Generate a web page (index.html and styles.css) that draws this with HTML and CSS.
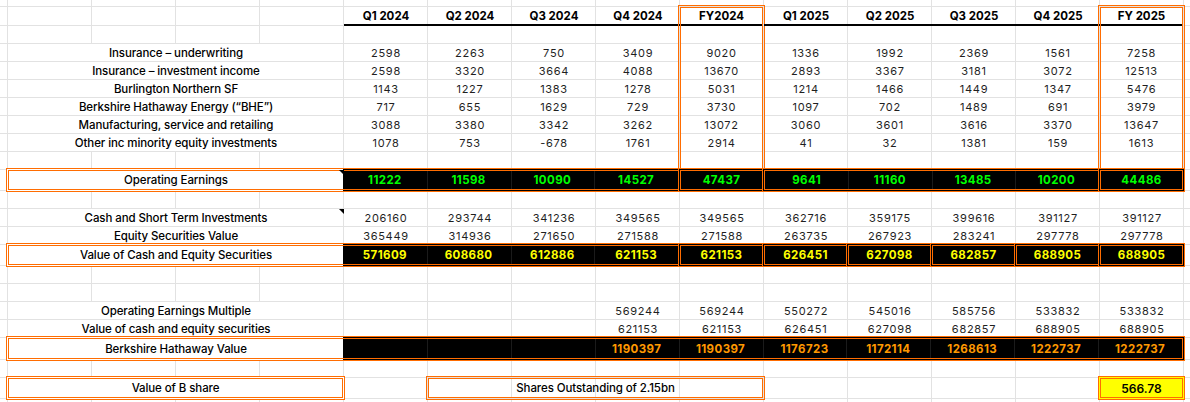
FILE: index.html
```html
<!DOCTYPE html>
<html lang="en">
<head>
<meta charset="utf-8">
<title>Berkshire Hathaway valuation</title>
<link rel="stylesheet" href="styles.css">
</head>
<body>
<div class="sheet">
  <div class="row h7"></div>

  <div class="row h19">
    <div class="nolab"></div>
    <div class="hd">Q1 2024</div>
    <div class="hd">Q2 2024</div>
    <div class="hd">Q3 2024</div>
    <div class="hd">Q4 2024</div>
    <div class="hd fyc fyt">FY2024</div>
    <div class="hd">Q1 2025</div>
    <div class="hd">Q2 2025</div>
    <div class="hd">Q3 2025</div>
    <div class="hd">Q4 2025</div>
    <div class="hd fyc fyt">FY 2025</div>
  </div>

  <div class="row">
    <div class="nolab"></div>
    <div></div><div></div><div></div><div></div>
    <div class="fyc"></div>
    <div></div><div></div><div></div><div></div>
    <div class="fyc"></div>
  </div>

  <div class="row">
    <div class="lab">Insurance – underwriting</div>
    <div class="n">2598</div><div class="n">2263</div><div class="n">750</div><div class="n">3409</div>
    <div class="n fyc">9020</div>
    <div class="n">1336</div><div class="n">1992</div><div class="n">2369</div><div class="n">1561</div>
    <div class="n fyc">7258</div>
  </div>

  <div class="row">
    <div class="lab">Insurance – investment income</div>
    <div class="n">2598</div><div class="n">3320</div><div class="n">3664</div><div class="n">4088</div>
    <div class="n fyc">13670</div>
    <div class="n">2893</div><div class="n">3367</div><div class="n">3181</div><div class="n">3072</div>
    <div class="n fyc">12513</div>
  </div>

  <div class="row">
    <div class="lab">Burlington Northern SF</div>
    <div class="n">1143</div><div class="n">1227</div><div class="n">1383</div><div class="n">1278</div>
    <div class="n fyc">5031</div>
    <div class="n">1214</div><div class="n">1466</div><div class="n">1449</div><div class="n">1347</div>
    <div class="n fyc">5476</div>
  </div>

  <div class="row">
    <div class="lab">Berkshire Hathaway Energy (“BHE”)</div>
    <div class="n">717</div><div class="n">655</div><div class="n">1629</div><div class="n">729</div>
    <div class="n fyc">3730</div>
    <div class="n">1097</div><div class="n">702</div><div class="n">1489</div><div class="n">691</div>
    <div class="n fyc">3979</div>
  </div>

  <div class="row">
    <div class="lab">Manufacturing, service and retailing</div>
    <div class="n">3088</div><div class="n">3380</div><div class="n">3342</div><div class="n">3262</div>
    <div class="n fyc">13072</div>
    <div class="n">3060</div><div class="n">3601</div><div class="n">3616</div><div class="n">3370</div>
    <div class="n fyc">13647</div>
  </div>

  <div class="row">
    <div class="lab">Other inc minority equity investments</div>
    <div class="n">1078</div><div class="n">753</div><div class="n">-678</div><div class="n">1761</div>
    <div class="n fyc">2914</div>
    <div class="n">41</div><div class="n">32</div><div class="n">1381</div><div class="n">159</div>
    <div class="n fyc">1613</div>
  </div>

  <div class="row">
    <div class="nolab"></div>
    <div></div><div></div><div></div><div></div>
    <div class="fyc"></div>
    <div></div><div></div><div></div><div></div>
    <div class="fyc"></div>
  </div>

  <div class="row h21">
    <div class="lab box nr note">Operating Earnings</div>
    <div class="box nl blk green s4"><div>11222</div><div>11598</div><div>10090</div><div>14527</div></div>
    <div class="box blk green"><div>47437</div></div>
    <div class="box blk green s4"><div>9641</div><div>11160</div><div>13485</div><div>10200</div></div>
    <div class="box blk green"><div>44486</div></div>
  </div>

  <div class="row"></div>

  <div class="row">
    <div class="lab note">Cash and Short Term Investments</div>
    <div class="n">206160</div><div class="n">293744</div><div class="n">341236</div><div class="n">349565</div>
    <div class="n">349565</div>
    <div class="n">362716</div><div class="n">359175</div><div class="n">399616</div><div class="n">391127</div>
    <div class="n">391127</div>
  </div>

  <div class="row">
    <div class="lab">Equity Securities Value</div>
    <div class="n">365449</div><div class="n">314936</div><div class="n">271650</div><div class="n">271588</div>
    <div class="n">271588</div>
    <div class="n">263735</div><div class="n">267923</div><div class="n">283241</div><div class="n">297778</div>
    <div class="n">297778</div>
  </div>

  <div class="row h21">
    <div class="lab box nr">Value of Cash and Equity Securities</div>
    <div class="box nl blk yellow s4"><div>571609</div><div>608680</div><div>612886</div><div>621153</div></div>
    <div class="box blk yellow"><div>621153</div></div>
    <div class="box blk yellow"><div>626451</div></div>
    <div class="box blk yellow"><div>627098</div></div>
    <div class="box blk yellow"><div>682857</div></div>
    <div class="box blk yellow"><div>688905</div></div>
    <div class="box blk yellow"><div>688905</div></div>
  </div>

  <div class="row"></div>
  <div class="row"></div>

  <div class="row">
    <div class="lab">Operating Earnings Multiple</div>
    <div></div><div></div><div></div>
    <div class="n">569244</div>
    <div class="n">569244</div>
    <div class="n">550272</div><div class="n">545016</div><div class="n">585756</div><div class="n">533832</div>
    <div class="n">533832</div>
  </div>

  <div class="row">
    <div class="lab">Value of cash and equity securities</div>
    <div></div><div></div><div></div>
    <div class="n">621153</div>
    <div class="n">621153</div>
    <div class="n">626451</div><div class="n">627098</div><div class="n">682857</div><div class="n">688905</div>
    <div class="n">688905</div>
  </div>

  <div class="row h22">
    <div class="lab box nr">Berkshire Hathaway Value</div>
    <div class="box nl blk orange s10">
      <div></div><div></div><div></div>
      <div>1190397</div><div>1190397</div>
      <div>1176723</div><div>1172114</div><div>1268613</div><div>1222737</div>
      <div>1222737</div>
    </div>
  </div>

  <div class="row"></div>

  <div class="row h21">
    <div class="lab box">Value of B share</div>
    <div></div>
    <div class="box s4 txt">Shares Outstanding of 2.15bn</div>
    <div></div><div></div><div></div><div></div>
    <div class="box yel">566.78</div>
  </div>

  <div class="row h10"></div>
</div>
</body>
</html>
```

FILE: styles.css
```css
html, body {
  margin: 0;
  padding: 0;
  background: #ffffff;
}

body {
  width: 1190px;
  height: 402px;
  overflow: hidden;
  font-family: Inter, "Liberation Sans", sans-serif;
  color: #000000;
}

.row {
  display: grid;
  grid-template-columns: 8px repeat(14, 84px) 6px;
  height: 18px;
  background-image:
    linear-gradient(to top, #e2e2e2 1px, transparent 1px),
    linear-gradient(to right, transparent 7px, #e2e2e2 7px, #e2e2e2 8px, transparent 8px);
  background-size: 100% 100%, 84px 100%;
  background-repeat: no-repeat, repeat-x;
}

.h7 { height: 7px; }
.h10 { height: 10px; }
.h19 { height: 19px; }
.h21 { height: 21px; }
.h22 { height: 22px; }

.row > div {
  min-width: 0;
  box-sizing: border-box;
}

.nolab,
.lab {
  grid-column: 2 / span 4;
}

.lab {
  background: #ffffff;
  box-shadow: inset -1px -1px 0 #e2e2e2;
  display: flex;
  align-items: center;
  justify-content: center;
  font-size: 11.5px;
  font-weight: 500;
  letter-spacing: -0.1px;
  white-space: nowrap;
}

.hd {
  display: flex;
  align-items: center;
  justify-content: center;
  font-size: 11.5px;
  font-weight: 700;
  white-space: nowrap;
  box-shadow: inset 0 -2px 0 #000000;
  padding-bottom: 2px;
}

.n {
  display: flex;
  align-items: center;
  justify-content: center;
  font-size: 11px;
  font-weight: 400;
  letter-spacing: 0.7px;
  color: #1f1f1f;
  white-space: nowrap;
}

/* FY column outline (header down to the row above Operating Earnings) */
.fyc {
  border-left: 3px double #ff6d01;
  border-right: 3px double #ff6d01;
  margin: 0 -1px 0 -2px;
}

.fyt {
  border-top: 3px double #ff6d01;
  margin-top: -2px;
}

/* double orange outlined boxes, drawn centred on the grid lines */
.row > .box {
  border: 3px double #ff6d01;
  margin: -2px -1px -1px -2px;
  box-shadow: none;
}

.row > .box.nr {
  border-right: 0;
  margin-right: 1px;
}

.row > .box.nl {
  border-left: 0;
  margin-left: -1px;
}

.s4 { grid-column: span 4; }
.s10 { grid-column: span 10; }

.blk {
  background: #000000;
  display: grid;
  grid-auto-flow: column;
  grid-auto-columns: 1fr;
  font-size: 11.5px;
  font-weight: 700;
  letter-spacing: 0.4px;
}

.blk > div {
  display: flex;
  align-items: center;
  justify-content: center;
  white-space: nowrap;
}

.blk > div + div {
  box-shadow: inset 1px 0 0 #1b1b1b;
}

.green { color: #00ff00; }
.yellow { color: #ffff00; }
.orange { color: #ff9900; }

.txt {
  display: flex;
  align-items: center;
  justify-content: center;
  font-size: 11.5px;
  font-weight: 500;
  letter-spacing: -0.1px;
  white-space: nowrap;
}

.yel {
  background: #ffff00;
  display: flex;
  align-items: center;
  justify-content: center;
  font-size: 12px;
  font-weight: 600;
}

/* comment indicator in the top-right corner of a cell */
.note {
  position: relative;
}

.note::after {
  content: "";
  position: absolute;
  top: 0;
  right: 0;
  width: 0;
  height: 0;
  border-top: 5px solid #000000;
  border-left: 5px solid transparent;
}

.box.note::after {
  top: -1px;
  right: -1px;
}
```
